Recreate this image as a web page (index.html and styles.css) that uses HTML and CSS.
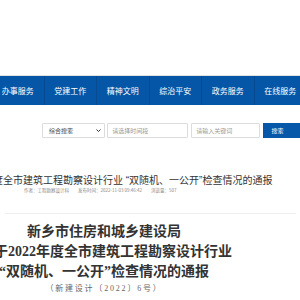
FILE: index.html
```html
<!DOCTYPE html>
<html lang="zh-CN">
<head>
<meta charset="utf-8">
<title>通报</title>
<link rel="stylesheet" href="styles.css">
</head>
<body>
<div class="top"></div>
<nav class="nav">
  <a class="nav-item">办事服务</a>
  <a class="nav-item">党建工作</a>
  <a class="nav-item">精神文明</a>
  <a class="nav-item">综治平安</a>
  <a class="nav-item">政务服务</a>
  <a class="nav-item">在线服务</a>
</nav>
<div class="search">
  <div class="field select">综合搜索<svg class="arrow" width="5" height="3" viewBox="0 0 5 3"><path d="M0.5 0.5 L2.5 2.5 L4.5 0.5" fill="none" stroke="#333" stroke-width="1"/></svg></div>
  <div class="field date">请选择时间段</div>
  <div class="field keyword">请输入关键词</div>
  <div class="btn">搜索</div>
</div>
<h1 class="title">度全市建筑工程勘察设计行业 “双随机、一公开”检查情况的通报</h1>
<div class="meta"><span>作者：工程勘察设计科</span><span>发布时间：2022-11-03 09:46:42</span><span>浏览量：507</span></div>
<div class="divider"></div>
<div class="article">
  <p class="line org">新乡市住房和城乡建设局</p>
  <p class="line">关于2022年度全市建筑工程勘察设计行业</p>
  <p class="line">“双随机、一公开”检查情况的通报</p>
  <p class="docno">（新建设计〔2022〕6号）</p>
</div>
</body>
</html>
```
FILE: styles.css
```css
html, body {
  margin: 0;
  padding: 0;
  overflow: hidden;
  background: #fff;
}
body {
  width: 300px;
  font-family: "Noto Sans CJK SC", "Noto Sans", sans-serif;
}
.top {
  height: 75px;
  border-bottom: 1px solid #e2e2e2;
}
.nav {
  display: flex;
  height: 29px;
  margin-left: -8px;
  background: #0556a7;
}
.nav-item {
  flex: 0 0 52.5px;
  box-sizing: border-box;
  display: flex;
  align-items: center;
  justify-content: center;
  color: #fff;
  font-size: 8px;
  border-right: 1px solid #064b92;
}
.search {
  display: flex;
  padding: 18px 0 0 42px;
  height: 15px;
  font-size: 6px;
}
.field {
  box-sizing: border-box;
  height: 15px;
  border: 1px solid #dcdcdc;
  border-radius: 1px;
  display: flex;
  align-items: center;
  padding-left: 4px;
  color: #999;
}
.select {
  width: 68px;
  color: #444;
  padding-left: 6px;
  justify-content: space-between;
  padding-right: 3px;
}
.date {
  width: 88px;
  margin-left: 2px;
}
.keyword {
  width: 74px;
  margin-left: 3px;
}
.btn {
  width: 40px;
  height: 15px;
  margin-left: 3px;
  background: #0758a9;
  color: #fff;
  display: flex;
  align-items: center;
  padding-left: 9px;
  box-sizing: border-box;
}
.title {
  margin: 37px 0 0 -7px;
  font-family: "Liberation Sans", "Noto Sans CJK SC", sans-serif;
  font-size: 10px;
  line-height: 12px;
  font-weight: normal;
  color: #333;
  white-space: nowrap;
}
.meta {
  display: flex;
  margin-top: 0;
  padding-left: 24px;
  font-size: 4.5px;
  line-height: 6px;
  color: #888;
  white-space: nowrap;
}
.meta span {
  margin-right: 9px;
}
.divider {
  height: 1px;
  background: #eeeeee;
  margin: 20px 4px 0 5px;
}
.article {
  width: 248px;
  margin-left: -20px;
  text-align: center;
  color: #333;
  font-family: "Liberation Serif", "Noto Sans CJK SC", serif;
  white-space: nowrap;
}
.line {
  margin: 0;
  font-size: 14px;
  line-height: 20px;
  font-weight: bold;
}
.org {
  margin-top: 8px;
}
.docno {
  margin: 2px 0 0;
  font-size: 8px;
  line-height: 9px;
  letter-spacing: 1.8px;
  color: #666;
}
```
